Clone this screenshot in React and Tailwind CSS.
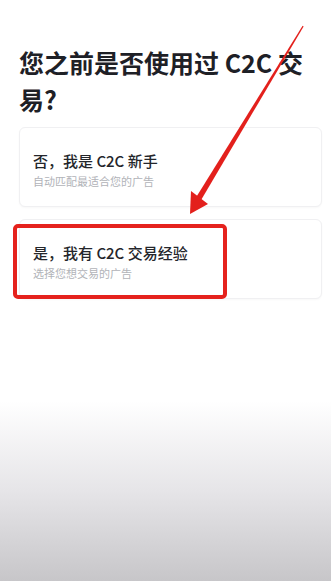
const options = [
  { title: "否，我是 C2C 新手", sub: "自动匹配最适合您的广告" },
  { title: "是，我有 C2C 交易经验", sub: "选择您想交易的广告", marked: true },
];

const Arrow = () => (
  <svg
    className="absolute left-0 top-0 pointer-events-none"
    width="331"
    height="581"
    viewBox="0 0 331 581"
  >
    <polygon points="201.4,199.6 196.6,196.4 302.6,25.7 303.6,26.4" fill="#e3201c" />
    <polygon points="190,214 191,191 208,204" fill="#e3201c" />
  </svg>
);

export default function App() {
  return (
    <div
      className="relative flex h-[581px] w-[331px] flex-col overflow-hidden bg-white"
      style={{ fontFamily: '"Noto Sans CJK SC", "Noto Sans", sans-serif' }}
    >
      <div className="pl-[19px] pr-[9px] pt-[44px]">
        <h1 className="pr-[10px] text-[25px] font-bold leading-[37px] text-[#1e2026]">
          您之前是否使用过 C2C 交易?
        </h1>

        <div className="mt-[9px] flex flex-col gap-[12px]">
          {options.map((o) => (
            <div
              key={o.title}
              className="relative h-[80px] rounded-md border border-[#f0f0f2] bg-white px-[13px] pt-[23px] shadow-[0_1px_2px_rgba(0,0,0,0.03)]"
            >
              <div className="text-[15px] font-medium leading-[20px] text-[#24262b]">
                {o.title}
              </div>
              <div className="mt-[2px] text-[11px] leading-[16px] text-[#b1b3b8]">
                {o.sub}
              </div>
              {o.marked && (
                <div className="absolute left-[-7px] top-[4px] h-[75px] w-[214px] rounded-[5px] border-4 border-[#e5221d]" />
              )}
            </div>
          ))}
        </div>
      </div>

      <div className="flex-1" />
      <div className="h-[180px] bg-gradient-to-b from-white via-[#e6e5e8] to-[#c7c6c9]" />

      <Arrow />
    </div>
  );
}
